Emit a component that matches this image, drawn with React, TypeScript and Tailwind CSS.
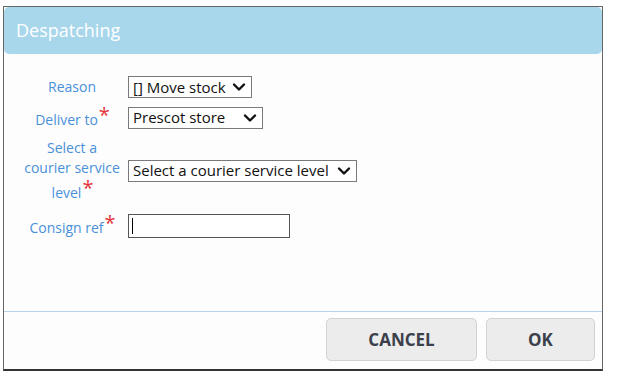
import React from "react";

const font = { fontFamily: '"Open Sans", "Noto Sans", sans-serif' };

function Chevron() {
  return (
    <svg width="14" height="10" viewBox="0 0 14 10" className="shrink-0">
      <path d="M2 2.5 L7 7.5 L12 2.5" stroke="#111" strokeWidth="2.4" fill="none" strokeLinecap="round" strokeLinejoin="round" />
    </svg>
  );
}

function FakeSelect({ value, width }: { value: string; width: string }) {
  return (
    <div className={`flex h-[22px] items-center justify-between border border-[#7a7a7a] bg-white pl-[4px] pr-[5px] text-[15px] leading-none text-[#111] ${width}`}>
      <span>{value}</span>
      <Chevron />
    </div>
  );
}

function Label({ lines, required }: { lines: string[]; required?: boolean }) {
  return (
    <div className="w-[100px] shrink-0 text-center text-[14px] leading-[20px] text-[#4a90d9]">
      {lines.map((line, i) => {
        const last = i === lines.length - 1;
        return (
          <div key={i} className={last && required ? "pt-[5px]" : ""}>
            {line}
            {last && required && (
              <span className="relative inline-block w-[11px]">
                {/* required marker, raised above the baseline */}
                <span className="absolute bottom-[4px] left-[1px] text-[20px] leading-[12px] text-[#e2343c]">*</span>
              </span>
            )}
          </div>
        );
      })}
    </div>
  );
}

export default function App() {
  return (
    <div className="h-[379px] w-[617px] bg-white pl-[3px] pt-[6px]" style={font}>
      <div className="flex h-[365px] w-[600px] flex-col border-x border-t border-b-2 border-x-[#666] border-t-[#666] border-b-[#333] bg-[#fdfdfd]">
        <div className="flex h-[47px] items-center rounded-[5px] bg-[#a8d6eb] pl-[12px] text-[18px] text-white">
          Despatching
        </div>
        <div className="flex flex-1 flex-col pl-[18px] pt-[22px]">
          <div className="flex items-center gap-[6px]">
            <Label lines={["Reason"]} />
            <FakeSelect value="[] Move stock" width="w-[124px]" />
          </div>
          <div className="mt-[7px] flex items-center gap-[6px]">
            <Label lines={["Deliver to"]} required />
            <FakeSelect value="Prescot store" width="w-[135px]" />
          </div>
          <div className="mt-[8px] flex items-center gap-[6px]">
            <Label lines={["Select a", "courier service", "level"]} required />
            <FakeSelect value="Select a courier service level" width="w-[229px]" />
          </div>
          <div className="mt-[10px] flex items-center gap-[6px]">
            <Label lines={["Consign ref"]} required />
            <div className="flex h-[24px] w-[162px] items-center border border-[#555] bg-white pl-[3px]">
              <div className="h-[16px] w-px bg-black" />
            </div>
          </div>
        </div>
        <div className="flex h-[58px] justify-end gap-[9px] border-t border-[#b9d3ec] pr-[7px] pt-[6px]">
          <button className="h-[43px] w-[151px] rounded-[5px] border border-[#d2d2d2] bg-[#ececec] text-[17px] font-bold text-[#3b404b]">
            CANCEL
          </button>
          <button className="h-[43px] w-[109px] rounded-[5px] border border-[#d2d2d2] bg-[#ececec] text-[17px] font-bold text-[#3b404b]">
            OK
          </button>
        </div>
      </div>
    </div>
  );
}
